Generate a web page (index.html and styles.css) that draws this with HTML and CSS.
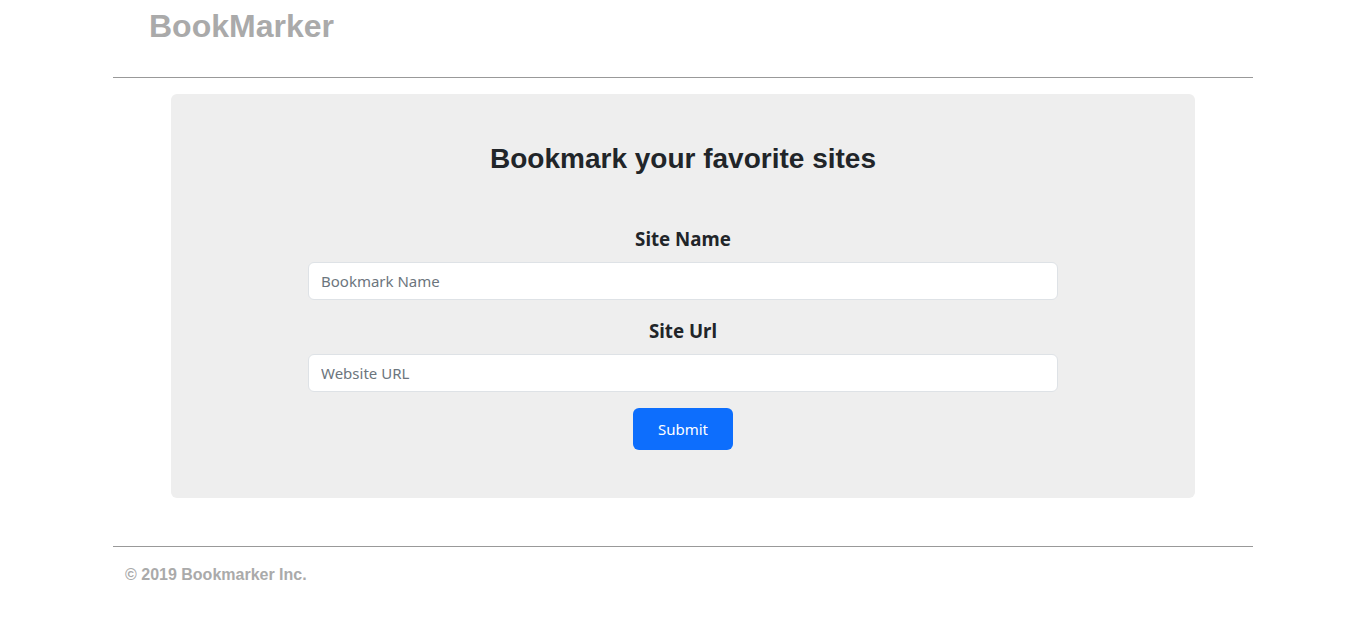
FILE: index.html
```html
<!DOCTYPE html>
<html lang="en">
<head>
<meta charset="utf-8">
<title>BookMarker</title>
<link rel="stylesheet" href="styles.css">
</head>
<body>
<div class="container">
  <header class="site-header">
    <h3 class="brand">BookMarker</h3>
  </header>
  <hr class="rule">
  <main class="main">
    <section class="jumbo">
      <h2 class="jumbo-title">Bookmark your favorite sites</h2>
      <form class="bm-form">
        <label class="field-label" for="siteName">Site Name</label>
        <input class="field-input" id="siteName" type="text" placeholder="Bookmark Name">
        <label class="field-label second" for="siteUrl">Site Url</label>
        <input class="field-input" id="siteUrl" type="text" placeholder="Website URL">
        <button class="btn-submit" type="button">Submit</button>
      </form>
    </section>
  </main>
  <hr class="rule">
  <footer class="site-footer">
    <p class="copy">&copy; 2019 Bookmarker Inc.</p>
  </footer>
</div>
</body>
</html>
```

FILE: styles.css
```css
* { box-sizing: border-box; }
html, body { margin: 0; padding: 0; background: #fff; }
body {
  font-family: "Liberation Sans", Arial, sans-serif;
  color: #212529;
}
.container {
  width: 1140px;
  margin: 0 auto;
}
.site-header {
  height: 77px;
  padding-top: 7px;
}
.brand {
  margin: 0 0 0 36px;
  font-size: 32px;
  line-height: 1.2;
  font-weight: 700;
  color: #aaa;
}
.rule {
  margin: 0;
  border: 0;
  border-top: 1px solid #999;
  height: 0;
}
.main {
  padding: 16px 58px 48px;
}
.jumbo {
  background: #eee;
  border-radius: 6px;
  padding: 48px 0 48px;
}
.jumbo-title {
  margin: 0;
  text-align: center;
  font-size: 28px;
  line-height: 1.2;
  font-weight: 700;
  color: #212529;
}
.bm-form {
  width: 750px;
  margin: 51px auto 0;
  display: flex;
  flex-direction: column;
  align-items: center;
}
.field-label {
  display: block;
  font-family: "Noto Sans", "Open Sans", sans-serif;
  font-size: 18.7px;
  font-weight: 700;
  line-height: 24px;
  margin-bottom: 11px;
  color: #212529;
}
.field-label.second { margin-top: 19px; }
.field-input {
  width: 100%;
  height: 38px;
  padding: 6px 12px;
  border: 1px solid #dee2e6;
  border-radius: 6px;
  background: #fff;
  font-family: "Noto Sans", "Open Sans", sans-serif;
  font-size: 15px;
  color: #212529;
  outline: none;
}
.field-input::placeholder { color: #6c757d; opacity: 1; }
.btn-submit {
  margin-top: 16px;
  width: 100px;
  height: 42px;
  border: 0;
  border-radius: 6px;
  background: #0d6efd;
  color: #fff;
  font-family: "Noto Sans", "Open Sans", sans-serif;
  font-size: 15px;
  cursor: pointer;
}
.site-footer {
  padding: 18px 12px 0;
}
.copy {
  margin: 0;
  font-size: 16px;
  line-height: 1.2;
  font-weight: 700;
  color: #aaa;
}
```
